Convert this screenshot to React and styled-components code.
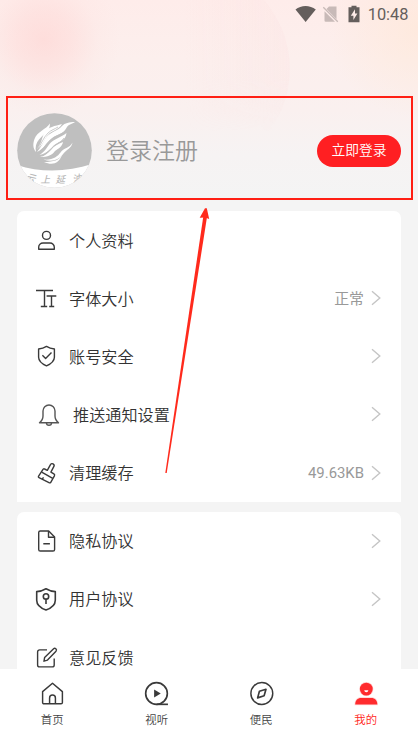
import React from 'react';
import styled, { createGlobalStyle } from 'styled-components';

const GlobalStyle = createGlobalStyle`
  * {
    box-sizing: border-box;
  }
  body {
    margin: 0;
    background: #f4f4f4;
    font-family: Roboto, 'Noto Sans CJK SC', sans-serif;
    font-weight: 350;
    color: #333;
  }
`;

const Screen = styled.div`
  position: relative;
  display: flex;
  flex-direction: column;
  width: 418px;
  height: 743px;
  overflow: hidden;
  background:
    radial-gradient(circle at 44px 40px, rgba(255, 205, 203, 0.5) 0, rgba(255, 207, 205, 0.34) 28px, rgba(255, 214, 211, 0.1) 54px, rgba(255, 220, 217, 0) 76px),
    radial-gradient(circle at 418px 28px, rgba(255, 232, 216, 0.7) 0, rgba(255, 235, 222, 0) 90px),
    linear-gradient(180deg, #feecea 0, #fcefed 60px, #faf0ef 110px, #f6f3f3 155px, #f4f4f4 200px);
`;

const Ring = styled.div`
  position: absolute;
  top: -36px;
  left: 80px;
  width: 210px;
  height: 210px;
  border-radius: 50%;
  background: linear-gradient(90deg, rgba(252, 226, 226, 0) 50%, rgba(252, 225, 225, 0.28) 100%);
  mask-image: linear-gradient(180deg, #000 55%, transparent 80%);
`;

const StatusBar = styled.div`
  display: flex;
  flex: none;
  align-items: center;
  justify-content: flex-end;
  height: 28px;
  padding-right: 9.5px;
  color: #645e5c;
  font-size: 16.4px;
  font-weight: 450;

  svg {
    margin-right: -2px;
  }
`;

const Profile = styled.section`
  position: relative;
  display: flex;
  flex: none;
  align-items: center;
  width: 407px;
  height: 104px;
  margin: 68px 0 11px 6px;
  padding: 5px 10px 0 9px;
  border: 2px solid #ff1f14;
`;

const Nickname = styled.span`
  flex: 1;
  margin-left: 14px;
  padding-top: 3px;
  color: #999;
  font-size: 23px;
  line-height: 32px;
`;

const LoginButton = styled.button`
  width: 84px;
  height: 32px;
  padding: 0;
  border: none;
  border-radius: 16px;
  background: #ff1f22;
  color: #fff;
  font-family: inherit;
  font-size: 13.8px;
  font-weight: 350;
  line-height: 31px;
`;

const Content = styled.main`
  display: flex;
  flex: 1;
  flex-direction: column;
  gap: 10px;
  min-height: 0;
  padding: 0 17px;
  overflow: hidden;
`;

const Card = styled.ul`
  flex: none;
  margin: 0;
  padding: 0 20px 0 17px;
  border-radius: 7px 7px 0 0;
  background: #fff;
  list-style: none;
`;

const Row = styled.li`
  display: flex;
  align-items: center;
  height: 58.15px;
`;

const RowIcon = styled.span`
  display: flex;
  width: ${({ $wide }) => ($wide ? '39px' : '35px')};
  padding-left: ${({ $wide }) => ($wide ? '3px' : '0')};
`;

const RowLabel = styled.span`
  flex: 1;
  padding-top: 3px;
  font-size: 16.15px;
  line-height: 24px;
`;

const RowValue = styled.span`
  margin-right: 7px;
  padding-top: 1px;
  color: #999;
  font-size: 14.9px;
  font-weight: 400;
  line-height: 22px;
`;

const TabBar = styled.nav`
  display: grid;
  flex: none;
  grid-template-columns: repeat(4, 1fr);
  height: 74px;
  padding-top: 12px;
  background: #fff;
`;

const Tab = styled.a`
  display: flex;
  flex-direction: column;
  align-items: center;
  gap: 6px;
  color: ${({ $active }) => ($active ? '#ff1f22' : '#444')};
  font-size: 11.4px;
  line-height: 17px;
`;

const Pointer = styled.svg`
  position: absolute;
  top: 200px;
  left: 156px;
`;

const Icon = ({ size = 24, children }) => (
  <svg width={size} height={size} viewBox="0 0 24 24" fill="none" stroke="#3a3a3a" strokeWidth="1.4" strokeLinejoin="round">
    {children}
  </svg>
);

const icons = {
  user: (
    <Icon>
      <circle cx="12.5" cy="7.4" r="4" />
      <path d="M4.7 21.2v-1.9a4.3 4.3 0 0 1 4.3-4.3h7a4.3 4.3 0 0 1 4.3 4.3v1.9z" />
    </Icon>
  ),
  font: (
    <Icon>
      <path d="M2 4.5h17M10.5 4.5v16M6.8 20.5h6.4M12.6 10h9.7M17.5 10v10.5M15.2 20.5h5" />
    </Icon>
  ),
  safe: (
    <Icon>
      <path d="M12.5 2.4c2.4 1.5 4.9 2.3 7.9 2.6v8.2c0 4-3.3 6.5-7.9 8.7-4.6-2.2-7.9-4.7-7.9-8.7V5c3-.3 5.5-1.1 7.9-2.6z" />
      <path d="M8.4 11.3l3.2 3.1 5.9-6" />
    </Icon>
  ),
  bell: (
    <Icon>
      <g stroke="#555">
        <path d="M2.5 20.8c2.2-1.7 3.5-3.9 3.5-6.7V9a6 6 0 0 1 12 0v5.1c0 2.8 1.3 5 3.5 6.7z" />
        <path d="M9.5 21a2.5 2.2 0 0 0 5 0" />
      </g>
    </Icon>
  ),
  clean: (
    <Icon>
      <path d="M13.3 9.3l3.3-5.9c1-1.9 4.4-.2 3.3 2l-3 5.7 3 1.8c.8.5.9 1.2.5 2l-3.5 6.2c-.4.8-1.1 1-1.9.5L5 16.6c-.6-.3-.8-.9-.4-1.500l4.400-6.700c.4-.6 1-.8 1.600-.4z" />
      <path d="M7.7 11.2l11 6.2M8.3 18.2l1.2-1.8" />
    </Icon>
  ),
  doc: (
    <Icon>
      <path d="M6.300 2h8.400l5.900 6v12.400a1.600 1.600 0 0 1-1.600 1.600H6.300a1.600 1.600 0 0 1-1.600-1.600V3.600A1.600 1.600 0 0 1 6.300 2z" />
      <path d="M14.5 2v6.200h6.100M9.300 14.700h6.600" />
    </Icon>
  ),
  agreement: (
    <Icon>
      <g strokeWidth="1.6">
        <path d="M12 1.800c2.900 1.700 5.800 2.600 9.300 2.800v8.600c0 4.700-4 7.900-9.300 9.700-5.300-1.800-9.300-5-9.300-9.700V4.600c3.500-.2 6.400-1.100 9.300-2.800z" />
        <circle cx="12" cy="9.4" r="2.7" />
        <path d="M12 12.1v5" />
      </g>
    </Icon>
  ),
  edit: (
    <Icon>
      <path d="M13 4.900H5.600a2 2 0 0 0-2 2v13a2 2 0 0 0 2 2h12.600a2 2 0 0 0 2-2v-6.500" />
      <path d="M10 16.200l.6-3.600 9-8.800c1.400-1.400 3.800.5 2.400 2.400l-8.500 8.900z" />
    </Icon>
  ),
};

const Chevron = () => (
  <svg width="10" height="16" viewBox="0 0 10 16" fill="none" stroke="#c5c5c5" strokeWidth="1.4">
    <path d="M1 1.2l7.8 6.800L1 14.800" />
  </svg>
);

const Avatar = () => (
  <svg width="75" height="75" viewBox="0 0 75 75">
    <defs>
      <clipPath id="avatar">
        <circle cx="37.5" cy="37.5" r="37.3" />
      </clipPath>
    </defs>
    <g clipPath="url(#avatar)">
      <path d="M0 0h75v75H0z" fill="#bfbfbf" />
      <path d="M0 52c24 8 51 7 75-1v24H0z" fill="#fff" />
      <g fill="#fff">
        <path d="M33 10.500c-4 6-13 8-15.500 15.500-1.500 4-2 9 1.500 13-1-5 0-9 3-12.500 5-6 11-8 11-16z" />
        <path d="M45 11c-7 2-14 3-17 8-4 6-2 9-8 17 7-4 7-10 11-14 4-5 11-5 14-11z" />
        <path d="M58 9c-6 0-10 1-13 4-4 5-13 6-17 13-2 4-4 8-8 13 8-4 9-9 14-13 7-6 12-4 16-12 2-3 5-3 8-5z" />
        <path d="M49.500 20c-5 4-13 6-17 11-3 4-5 8-10 11 8-2 11-6 15-10 5-4 11-4 12-12z" />
        <path d="M46 29c-5 2-9 4-12 8-3 3-6 6-11 7 8 0 12-2 15-6 4-3 7-4 8-9z" />
        <path d="M55.500 29.500c-3 6-9 5-12 10-3 4-8 8-17 7 9 3 16 0 20-6 3-4 8-5 9-11z" />
        <path d="M45 42c-3 5-8 7-18 7 9 4 15 1 18-7z" />
      </g>
      <g fill="none" stroke="#bfbfbf" strokeWidth="0.8">
        <path d="M20 37c5-7 6-12 11-17 3-3 7-4 10-6" />
        <path d="M22 40c6-6 8-11 14-15 5-3 10-4 14-9" />
        <path d="M25 43c7-4 9-8 13-11 4-2 7-4 9-7" />
      </g>
      <g fill="#b8b8b8" fontFamily="'Noto Sans CJK SC', sans-serif" fontSize="9.5" fontStyle="italic" fontWeight="500">
        <text x="9" y="68" transform="rotate(14 13 64)">云</text>
        <text x="23.5" y="70">上</text>
        <text x="38.5" y="70">延</text>
        <text x="55" y="69" transform="rotate(-12 60 65)">油</text>
      </g>
    </g>
  </svg>
);

const tabs = [
  {
    label: '首页',
    icon: (
      <Icon size={25}>
        <path d="M2.5 10.200L12 2.200l9.500 8v10.400a1.300 1.300 0 0 1-1.300 1.300H3.800a1.300 1.300 0 0 1-1.300-1.300z" />
        <path d="M9.200 21.700v-5.400a2.800 2.800 0 0 1 5.600 0v5.400" />
      </Icon>
    ),
  },
  {
    label: '视听',
    icon: (
      <Icon size={25}>
        <circle cx="12" cy="12" r="10.4" strokeWidth="1.6" />
        <path d="M12 22.400h11" strokeWidth="1.6" />
        <path d="M9.700 8.200v7.600l6.400-3.800z" fill="#3a3a3a" stroke="none" />
      </Icon>
    ),
  },
  {
    label: '便民',
    icon: (
      <Icon size={25}>
        <circle cx="12.3" cy="12" r="10.5" />
        <path d="M16.300 7.900l-1.800 6.300-6.200 2 1.700-6.400z" strokeWidth="1.6" />
      </Icon>
    ),
  },
  {
    label: '我的',
    active: true,
    icon: (
      <svg width="25" height="25" viewBox="0 0 25 25">
        <circle cx="13.3" cy="8.1" r="7.1" fill="#ffd0d0" />
        <path d="M1.500 24.300c-.3-6 3-8.400 7-8.400H18c4 0 7.300 2.400 7 8.400z" fill="#ffdcdc" />
        <circle cx="13.3" cy="8.1" r="6.4" fill="#ff2b2e" />
        <path d="M2.200 23.500c0-4 2.200-6.500 6-6.500h10.100c3.800 0 6 2.500 6 6.500z" fill="#ff2b2e" />
        <path d="M11.300 9.300h4c0 2.500-4 2.500-4 0z" fill="#fff" />
      </svg>
    ),
  },
];

const groups = [
  [
    { icon: 'user', label: '个人资料', plain: true },
    { icon: 'font', label: '字体大小', value: '正常' },
    { icon: 'safe', label: '账号安全' },
    { icon: 'bell', label: '推送通知设置', wide: true },
    { icon: 'clean', label: '清理缓存', value: '49.63KB' },
  ],
  [
    { icon: 'doc', label: '隐私协议' },
    { icon: 'agreement', label: '用户协议' },
    { icon: 'edit', label: '意见反馈', plain: true },
  ],
];

const App = () => {
  return (
    <>
      <GlobalStyle />
      <Screen>
        <Ring />
        <StatusBar>
          <svg width="75" height="20" viewBox="0 0 75 20">
            <path d="M.5 5.500C6 .8 15 .8 20.800 5.500L10.600 18z" fill="#645e5c" />
            <path d="M34 2.500h7.500v12.800L31.500 5zM29.500 7.200L40 17.700H30.700a1.200 1.200 0 0 1-1.200-1.200z" fill="#c8bab8" />
            <path d="M28.300 3.300l14.500 14.500" stroke="#c8bab8" strokeWidth="1.3" />
            <path d="M53.500 3.300h3V1.800h5v1.500h3v15h-11z" fill="#645e5c" />
            <path d="M60 5.300l-4.200 6.400h2.600v4.300l4-6.400h-2.400z" fill="#fdebe8" />
          </svg>
          10:48
        </StatusBar>
        <Profile>
          <Avatar />
          <Nickname>登录注册</Nickname>
          <LoginButton>立即登录</LoginButton>
        </Profile>
        <Content>
          {groups.map((rows, index) => (
            <Card key={index}>
              {rows.map((row) => (
                <Row key={row.label}>
                  <RowIcon $wide={row.wide}>{icons[row.icon]}</RowIcon>
                  <RowLabel>{row.label}</RowLabel>
                  {row.value && <RowValue>{row.value}</RowValue>}
                  {!row.plain && <Chevron />}
                </Row>
              ))}
            </Card>
          ))}
        </Content>
        <TabBar>
          {tabs.map((tab) => (
            <Tab key={tab.label} $active={tab.active}>
              {tab.icon}
              {tab.label}
            </Tab>
          ))}
        </TabBar>
        <Pointer width="60" height="280" viewBox="0 0 60 280" fill="#ff2a1c">
          <path d="M9.300 273L47.300 16.500l3.700.5L10.700 273z" />
          <path d="M49 8.200h1.800L53.200 19l-4-1.500-5.500.3z" />
        </Pointer>
      </Screen>
    </>
  );
};

export default App;
